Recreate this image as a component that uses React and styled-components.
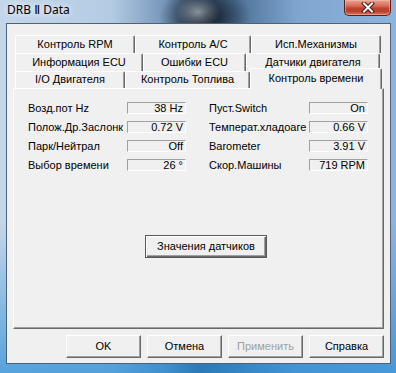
import React from "react";
import styled, { createGlobalStyle } from "styled-components";

const GlobalStyle = createGlobalStyle`
  html, body {
    margin: 0;
    padding: 0;
  }
  body {
    background: #1b2633;
    font-family: "Liberation Sans", Arial, sans-serif;
    font-size: 11px;
  }
`;

// окно Win7
const Window = styled.div`
  width: 396px;
  height: 373px;
  box-sizing: border-box;
  padding: 0 5px 9px 6px;
  display: flex;
  flex-direction: column;
  overflow: hidden;
  background:
    radial-gradient(ellipse 22px 16px at 198px 12px, rgba(230, 236, 244, 0.55), transparent),
    radial-gradient(ellipse 46px 30px at 205px 16px, rgba(14, 20, 30, 0.95), transparent),
    linear-gradient(to bottom, transparent 0, transparent 60%, rgba(40, 140, 215, 0.7) 100%),
    linear-gradient(to right, #c3d6ea 0%, #b4cce3 28%, #7494b8 42%, #35506e 50%, #4f7298 60%, #7ea6cf 75%, #8cb4dc 100%);
`;

const TitleBar = styled.div`
  height: 23px;
  display: flex;
  justify-content: space-between;
  align-items: flex-start;
`;

const Title = styled.div`
  margin-left: 1px;
  padding-top: 2px;
  font-family: "Noto Sans", "DejaVu Sans", sans-serif;
  font-size: 12px;
  line-height: 16px;
  color: #000;
  text-shadow: 0 0 6px rgba(255, 255, 255, 0.9), 0 0 10px rgba(255, 255, 255, 0.7);
`;

const CloseButton = styled.div`
  width: 47px;
  height: 16px;
  box-sizing: border-box;
  border: 1px solid #5e1d14;
  border-top: none;
  border-radius: 0 0 5px 5px;
  background: linear-gradient(to bottom, #e8a595 0%, #d66a55 40%, #c1412c 55%, #b8402d 75%, #d9785c 100%);
  box-shadow: inset 0 0 0 1px rgba(255, 200, 190, 0.45);
  display: flex;
  align-items: center;
  justify-content: center;
`;

const Client = styled.div`
  flex: 1;
  display: flex;
  flex-direction: column;
  border: 1px solid #4d6177;
  background: #f0f0f0;
  padding: 11px 6px 5px 6px;
`;

const TabControl = styled.div`
  flex: 1;
  display: flex;
  flex-direction: column;
`;

const TabRow = styled.div`
  display: flex;
  height: ${({ h }) => h}px;
  padding-left: 2px;
`;

const Tab = styled.div`
  width: ${({ w }) => w}px;
  height: ${({ h }) => h}px;
  box-sizing: border-box;
  border-top: 1px solid #fff;
  border-left: 1px solid #fff;
  border-right: 1px solid #696969;
  box-shadow: inset -1px 0 #a0a0a0;
  border-radius: 2px 2px 0 0;
  background: #f0f0f0;
  text-align: center;
  line-height: ${({ h }) => h - 2}px;
  color: #000;
  white-space: nowrap;
`;

const ActiveTab = styled(Tab)`
  position: relative;
  z-index: 2;
  margin-top: -3px;
  margin-left: 0;
  height: 21px;
  line-height: 19px;
`;

const Panel = styled.div`
  flex: 1;
  border-top: 1px solid #fff;
  border-left: 1px solid #fff;
  border-right: 1px solid #696969;
  border-bottom: 1px solid #696969;
  box-shadow: inset -1px -1px #a0a0a0;
  padding: 13px 14px;
`;

const Fields = styled.div`
  display: flex;
  gap: 23px;
`;

const Column = styled.div`
  display: flex;
  flex-direction: column;
  gap: 7px;
`;

const Field = styled.div`
  display: flex;
  align-items: center;
  height: 12px;
`;

const Label = styled.div`
  width: ${({ w }) => w}px;
  overflow: hidden;
  white-space: nowrap;
  color: #000;
  line-height: 12px;
`;

const ValueBox = styled.div`
  width: 59px;
  height: 12px;
  box-sizing: border-box;
  border-top: 1px solid #a0a0a0;
  border-left: 1px solid #a0a0a0;
  border-bottom: 1px solid #fff;
  border-right: 1px solid #fff;
  padding-right: 2px;
  text-align: right;
  line-height: 10px;
  color: #000;
  white-space: nowrap;
`;

const SensorButton = styled.div`
  margin: 64px 0 0 117px;
  width: 122px;
  height: 23px;
  box-sizing: border-box;
  border: 1px solid #5a5a5a;
  background: #f0f0f0;
  box-shadow: inset 1px 1px #fff, inset -1px -1px #696969, inset -2px -2px #a0a0a0;
  text-align: center;
  line-height: 20px;
  color: #000;
`;

const ButtonBar = styled.div`
  display: flex;
  justify-content: flex-end;
  gap: 6px;
  margin-top: 6px;
`;

const DialogButton = styled.div`
  width: 75px;
  height: 23px;
  box-sizing: border-box;
  border-top: 1px solid #fff;
  border-left: 1px solid #fff;
  border-right: 1px solid #696969;
  border-bottom: 1px solid #696969;
  box-shadow: inset -1px -1px #a0a0a0;
  background: #f0f0f0;
  text-align: center;
  line-height: 21px;
  color: ${({ disabled }) => (disabled ? "#a0a0a0" : "#000")};
`;

const leftFields = [
  ["Возд.пот Hz", "38 Hz"],
  ["Полож.Др.Заслонк", "0.72 V"],
  ["Парк/Нейтрал", "Off"],
  ["Выбор времени", "26 °"],
];

const rightFields = [
  ["Пуст.Switch", "On"],
  ["Температ.хладоаге", "0.66 V"],
  ["Barometer", "3.91 V"],
  ["Скор.Машины", "719 RPM"],
];

function CloseIcon() {
  return (
    <svg width="14" height="11" viewBox="0 0 14 11">
      <path d="M3 1.5 L11 9.5 M11 1.5 L3 9.5" stroke="#4a1a12" strokeWidth="4" strokeLinecap="square" />
      <path d="M3 1.5 L11 9.5 M11 1.5 L3 9.5" stroke="#fff" strokeWidth="2" strokeLinecap="square" />
    </svg>
  );
}

export default function App() {
  return (
    <>
      <GlobalStyle />
      <Window>
        <TitleBar>
          <Title>DRB Ⅱ Data</Title>
          <CloseButton>
            <CloseIcon />
          </CloseButton>
        </TitleBar>
        <Client>
          <TabControl>
            <TabRow h={18}>
              <Tab w={120} h={18}>Контроль RPM</Tab>
              <Tab w={116} h={18}>Контроль A/C</Tab>
              <Tab w={130} h={18}>Исп.Механизмы</Tab>
            </TabRow>
            <TabRow h={18}>
              <Tab w={128} h={18}>Информация ECU</Tab>
              <Tab w={103} h={18}>Ошибки ECU</Tab>
              <Tab w={134} h={18}>Датчики двигателя</Tab>
            </TabRow>
            <TabRow h={17}>
              <Tab w={110} h={17}>I/O Двигателя</Tab>
              <Tab w={125} h={17}>Контроль Топлива</Tab>
              <ActiveTab w={132} h={21}>Контроль времени</ActiveTab>
            </TabRow>
            <Panel>
              <Fields>
                <Column>
                  {leftFields.map(([label, value]) => (
                    <Field key={label}>
                      <Label w={99}>{label}</Label>
                      <ValueBox>{value}</ValueBox>
                    </Field>
                  ))}
                </Column>
                <Column>
                  {rightFields.map(([label, value]) => (
                    <Field key={label}>
                      <Label w={100}>{label}</Label>
                      <ValueBox>{value}</ValueBox>
                    </Field>
                  ))}
                </Column>
              </Fields>
              <SensorButton>Значения датчиков</SensorButton>
            </Panel>
          </TabControl>
          <ButtonBar>
            <DialogButton>OK</DialogButton>
            <DialogButton>Отмена</DialogButton>
            <DialogButton disabled>Применить</DialogButton>
            <DialogButton>Справка</DialogButton>
          </ButtonBar>
        </Client>
      </Window>
    </>
  );
}
